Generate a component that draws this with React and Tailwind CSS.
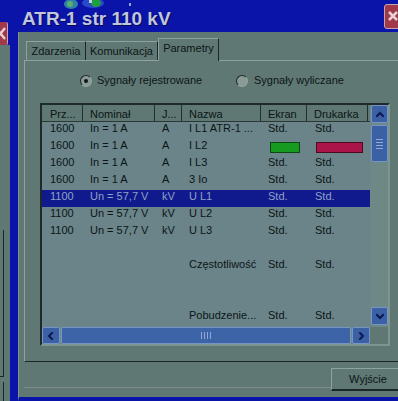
import React from 'react';

const rows = [
  { p: '1600', n: 'In = 1 A', j: 'A', name: 'I L1 ATR-1 ...', e: 'Std.', d: 'Std.' },
  { p: '1600', n: 'In = 1 A', j: 'A', name: 'I L2', colors: true },
  { p: '1600', n: 'In = 1 A', j: 'A', name: 'I L3', e: 'Std.', d: 'Std.' },
  { p: '1600', n: 'In = 1 A', j: 'A', name: '3 Io', e: 'Std.', d: 'Std.' },
  { sel: true, p: '1100', n: 'Un = 57,7 V', j: 'kV', name: 'U L1', e: 'Std.', d: 'Std.' },
  { p: '1100', n: 'Un = 57,7 V', j: 'kV', name: 'U L2', e: 'Std.', d: 'Std.' },
  { p: '1100', n: 'Un = 57,7 V', j: 'kV', name: 'U L3', e: 'Std.', d: 'Std.' },
  {},
  { name: 'Częstotliwość', e: 'Std.', d: 'Std.' },
  {},
  {},
  { name: 'Pobudzenie...', e: 'Std.', d: 'Std.' },
];

function Chevron({ dir }) {
  const pts = {
    up: '1,6 4,3 7,6',
    down: '1,3 4,6 7,3',
    left: '5,1 2,4 5,7',
    right: '3,1 6,4 3,7',
  }[dir];
  return (
    <svg width="8" height="8" viewBox="0 0 8 8">
      <polyline points={pts} fill="none" stroke="#0b1856" strokeWidth="2" strokeLinecap="square" />
    </svg>
  );
}

function ScrollBtn({ dir, className }) {
  return (
    <div
      className={
        'flex shrink-0 items-center justify-center rounded-[2px] border border-[#7794c6] bg-[#3c60a4] ' +
        className
      }
    >
      <Chevron dir={dir} />
    </div>
  );
}

function Radio({ checked }) {
  return (
    <div className="flex h-[12px] w-[12px] shrink-0 items-center justify-center rounded-full border border-t-[#1c2828] border-l-[#1c2828] border-r-[#93a5a0] border-b-[#93a5a0] bg-[#8a9b97]">
      {checked && <div className="h-[4px] w-[4px] rounded-full bg-[#0d1515]" />}
    </div>
  );
}

function Cell({ w, children, first }) {
  return (
    <div
      className={
        'shrink-0 overflow-hidden whitespace-nowrap ' +
        (first ? 'pl-[8px] ' : 'pl-[7px] ') +
        w
      }
    >
      {children}
    </div>
  );
}

export default function App() {
  return (
    <div className="flex h-[401px] w-[398px] overflow-hidden bg-[#0b14a8] font-['Liberation_Sans',Arial,sans-serif] text-[11px] text-[#0c1515]">
      {/* fragment of the window behind */}
      <div className="flex w-[10px] shrink-0 flex-col bg-[#5f7873]">
        <div className="h-[22px] bg-[#0b14a8]" />
        <div className="flex h-[23px] w-[10px] bg-[#0b14a8]">
          <div className="h-[23px] w-[8px] overflow-hidden rounded-r-[2px] border-r border-[#c9a3ab] bg-[#a03a4a]">
            <svg width="8" height="23" viewBox="0 0 8 23">
              <path d="M-4 6 L5 17 M5 6 L-4 17" stroke="#e6d2d6" strokeWidth="2.5" fill="none" />
            </svg>
          </div>
        </div>
        <div className="flex flex-1 flex-col">
          <div className="ml-[3px] mt-[185px] h-[146px] border-l border-[#1b2626]" />
          <div className="w-[4px] border-t border-[#1b2626]" />
          <div className="ml-[3px] mt-[5px] flex-1 border-l border-[#1b2626]" />
        </div>
      </div>

      {/* dialog */}
      <div className="flex w-[400px] shrink-0 flex-col">
        {/* title bar */}
        <div className="relative flex h-[32px] shrink-0 items-center justify-between bg-[#0b14a8] pl-[12px] pr-[8px]">
          <div className="mt-[5px] whitespace-nowrap text-[19px] font-bold leading-none text-[#c0c7de] [text-shadow:1px_1px_0_#060a52]">
            ATR-1 str 110 kV
          </div>
          <div className="flex h-[25px] w-[18px] items-center justify-center rounded-[3px] border border-[#c9a3ab] bg-[#a03a4a]">
            <svg width="12" height="12" viewBox="0 0 12 12">
              <path d="M2 2 L10 10 M10 2 L2 10" stroke="#e6d2d6" strokeWidth="2.5" fill="none" />
            </svg>
          </div>
          {/* tray icons overlapping the top */}
          <svg className="absolute left-[53px] top-0" width="70" height="12" viewBox="0 0 70 12">
            <ellipse cx="8" cy="4" rx="7" ry="5" fill="#2f7fa8" />
            <ellipse cx="7" cy="4" rx="3" ry="3" fill="#58b06a" />
            <ellipse cx="30" cy="3" rx="11" ry="5" fill="#2a48c8" />
            <ellipse cx="33" cy="3" rx="5" ry="4" fill="#1fa040" />
            <rect x="26" y="0" width="3" height="3" fill="#b8d0e8" />
            <rect x="66" y="3" width="2" height="3" fill="#8fa8d8" />
          </svg>
        </div>

        <div className="flex flex-1">
          <div className="w-[8px] shrink-0 bg-[#0b14a8]" />
          <div className="flex flex-1 flex-col border-b-4 border-l border-b-[#0b14a8] border-l-[#7f928d] bg-[#5f7873] pl-[5px] pt-[6px]">
            {/* tabs */}
            <div className="relative z-10 flex h-[22px] items-end pl-[2px]">
              <div className="flex h-[19px] w-[60px] items-center justify-center border-l border-t border-r border-l-[#8ea39d] border-t-[#8ea39d] border-r-[#1b2626] leading-none">
                Zdarzenia
              </div>
              <div className="flex h-[19px] w-[72px] items-center justify-center border-t border-r border-t-[#8ea39d] border-r-[#1b2626] leading-none">
                Komunikacja
              </div>
              <div className="-mb-px flex h-[23px] w-[61px] items-center justify-center border-l border-t border-r border-l-[#8ea39d] border-t-[#8ea39d] border-r-[#1b2626] bg-[#5f7873] pb-[3px] leading-none">
                Parametry
              </div>
            </div>

            {/* tab panel */}
            <div className="flex h-[302px] shrink-0 flex-col border-l border-t border-b border-l-[#8ea39d] border-t-[#8ea39d] border-b-[#1b2626]">
              <div className="ml-[55px] mt-[13px] flex h-[13px] items-center">
                <div className="flex w-[156px] items-center gap-[5px]">
                  <Radio checked />
                  <span className="whitespace-nowrap">Sygnały rejestrowane</span>
                </div>
                <div className="flex items-center gap-[6px]">
                  <Radio />
                  <span className="whitespace-nowrap">Sygnały wyliczane</span>
                </div>
              </div>

              {/* list view */}
              <div className="ml-[15px] mt-[16px] flex h-[243px] w-[350px] flex-col border-2 border-t-[#1e2a2a] border-l-[#1e2a2a] border-r-[#7e948f] border-b-[#7e948f] bg-[#6a8489]">
                <div className="flex h-[222px]">
                  <div className="flex w-[328px] flex-col">
                    <div className="flex h-[17px] border-b border-[#2a3838] bg-[#5f7873] leading-[18px]">
                      <div className="w-[41px] shrink-0 border-r border-[#24302f] pl-[8px]">Prz...</div>
                      <div className="w-[72px] shrink-0 border-r border-[#24302f] pl-[7px]">Nominał</div>
                      <div className="w-[27px] shrink-0 border-r border-[#24302f] pl-[7px]">J...</div>
                      <div className="w-[79px] shrink-0 border-r border-[#24302f] pl-[7px]">Nazwa</div>
                      <div className="w-[46px] shrink-0 border-r border-[#24302f] pl-[7px]">Ekran</div>
                      <div className="w-[61px] shrink-0 border-r border-[#24302f] pl-[7px]">Drukarka</div>
                    </div>
                    {rows.map((r, i) => (
                      <div
                        key={i}
                        className={
                          'flex h-[17px] leading-[13px] ' +
                          (r.sel ? 'bg-[#101a8c] text-[#8ea1c8]' : '')
                        }
                      >
                        <Cell w="w-[41px]" first>{r.p}</Cell>
                        <Cell w="w-[72px]">{r.n}</Cell>
                        <Cell w="w-[27px]">{r.j}</Cell>
                        <Cell w="w-[79px]">{r.name}</Cell>
                        {r.colors ? (
                          <>
                            <div className="w-[46px] shrink-0 pl-[9px] pt-[3px]">
                              <div className="h-[11px] w-[30px] border border-[#0b4a12] bg-[#169a20]" />
                            </div>
                            <div className="w-[61px] shrink-0 pl-[9px] pt-[3px]">
                              <div className="h-[11px] w-[47px] border border-[#4a0a20] bg-[#ab1448]" />
                            </div>
                          </>
                        ) : (
                          <>
                            <Cell w="w-[46px]">{r.e}</Cell>
                            <div className="w-[61px] shrink-0 overflow-hidden whitespace-nowrap pl-[8px]">{r.d}</div>
                          </>
                        )}
                      </div>
                    ))}
                  </div>

                  {/* vertical scrollbar */}
                  <div className="flex w-[18px] flex-col bg-[#6e8985] pl-[1px]">
                    <ScrollBtn dir="up" className="h-[18px] w-[17px]" />
                    <div className="mt-[2px] flex h-[37px] w-[17px] flex-col items-center justify-center gap-[2px] rounded-[2px] border border-[#7794c6] bg-[#3c60a4]">
                      <div className="h-px w-[7px] bg-[#90a8d8]" />
                      <div className="h-px w-[7px] bg-[#90a8d8]" />
                      <div className="h-px w-[7px] bg-[#90a8d8]" />
                      <div className="h-px w-[7px] bg-[#90a8d8]" />
                    </div>
                    <div className="flex-1" />
                    <ScrollBtn dir="down" className="h-[18px] w-[17px]" />
                    <div className="h-[2px]" />
                  </div>
                </div>

                {/* horizontal scrollbar */}
                <div className="flex h-[17px]">
                  <div className="flex w-[328px] bg-[#6e8985]">
                    <ScrollBtn dir="left" className="h-[17px] w-[18px]" />
                    <div className="mx-px flex flex-1 items-center justify-center gap-[2px] rounded-[2px] border border-[#7794c6] bg-[#3c64a6]">
                      <div className="h-[7px] w-px bg-[#90a8d8]" />
                      <div className="h-[7px] w-px bg-[#90a8d8]" />
                      <div className="h-[7px] w-px bg-[#90a8d8]" />
                      <div className="h-[7px] w-px bg-[#90a8d8]" />
                    </div>
                    <ScrollBtn dir="right" className="h-[17px] w-[18px]" />
                  </div>
                  <div className="flex-1 bg-[#5f7873]" />
                </div>
              </div>
            </div>

            {/* bottom button row */}
            <div className="mt-[6px] flex h-[23px] shrink-0 items-end">
              <div className="mb-[3px] w-[307px] border-b border-[#7d8b89]" />
              <div className="flex h-[23px] w-[75px] items-center justify-center border-l border-t border-b-2 border-r-2 border-l-[#8ea39d] border-t-[#8ea39d] border-b-[#1b2626] border-r-[#1b2626]">
                Wyjście
              </div>
            </div>
            <div className="flex-1" />
          </div>
        </div>
      </div>
    </div>
  );
}
